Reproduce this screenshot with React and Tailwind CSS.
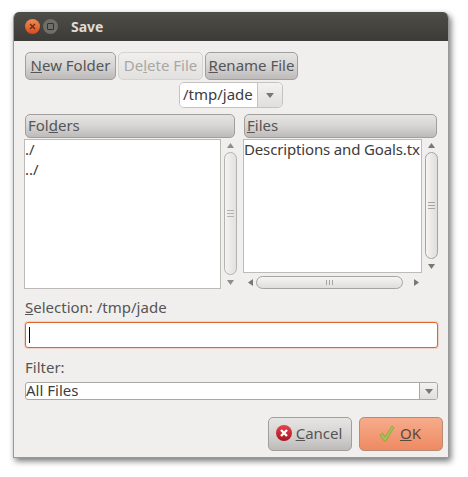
import React from 'react';

const buttonGrad = 'bg-gradient-to-b from-[#e6e5e3] via-[#d6d5d3] to-[#bcbbb9] border border-[#a09f9c] rounded-[5px]';

const ToolButton = ({ className, disabled, children }) => (
    <div
        className={`flex items-center justify-center h-[28px] pb-[2px] text-[15px] ${className} ${
            disabled
                ? 'border border-[#d4d3d0] rounded-[5px] bg-gradient-to-b from-[#f0efed] to-[#e2e1df] text-[#a8a7a4]'
                : `${buttonGrad} text-[#555]`
        }`}
    >
        {children}
    </div>
);

const Arrow = ({ dir }) => {
    const points = {
        up: '0,5 3.5,0 7,5',
        down: '0,0 7,0 3.5,5',
        left: '5,0 5,7 0,3.5',
        right: '0,0 0,7 5,3.5',
    };
    return (
        <svg width={dir === 'up' || dir === 'down' ? 7 : 5} height={dir === 'up' || dir === 'down' ? 5 : 7}>
            <polygon points={points[dir]} fill="#777" />
        </svg>
    );
};

const VScroll = ({ faded }) => (
    <div className={`flex flex-col items-center h-full w-[13px] ${faded ? 'opacity-80' : ''}`}>
        <div className="h-[13px] flex items-center"><Arrow dir="up" /></div>
        <div className="flex-1 w-[13px] rounded-[7px] border border-[#a5a4a1] bg-gradient-to-r from-[#f5f4f3] to-[#dfdedc] flex flex-col items-center justify-center gap-[2px]">
            <div className="w-[7px] h-px bg-[#a5a4a1]" />
            <div className="w-[7px] h-px bg-[#a5a4a1]" />
            <div className="w-[7px] h-px bg-[#a5a4a1]" />
        </div>
        <div className="h-[14px] flex items-center"><Arrow dir="down" /></div>
    </div>
);

const HScroll = () => (
    <div className="flex items-center h-[13px] mt-[3px] pl-[5px] w-[180px]">
        <div className="w-[5px] flex justify-center"><Arrow dir="left" /></div>
        <div className="ml-[3px] w-[147px] h-[13px] rounded-[7px] border border-[#a5a4a1] bg-gradient-to-b from-[#f5f4f3] to-[#dfdedc] flex items-center justify-center gap-[2px]">
            <div className="w-px h-[5px] bg-[#a5a4a1]" />
            <div className="w-px h-[5px] bg-[#a5a4a1]" />
            <div className="w-px h-[5px] bg-[#a5a4a1]" />
        </div>
        <div className="ml-[11px] w-[5px] flex justify-center"><Arrow dir="right" /></div>
    </div>
);

const ColumnHeader = ({ children }) => (
    <div className={`h-[24px] flex items-center pl-[2px] pb-[2px] text-[15px] text-[#555] ${buttonGrad}`}>{children}</div>
);

const ComboArrow = ({ className }) => (
    <div className={`flex items-center justify-center bg-gradient-to-b from-[#f3f2f1] to-[#e0dfdd] ${className}`}>
        <svg width="8" height="5"><polygon points="0,0 8,0 4,5" fill="#777" /></svg>
    </div>
);

export default function App() {
    return (
        <div className="w-[468px] h-[477px] bg-white pt-[12px] pl-[13px] font-['Noto_Sans','Open_Sans',sans-serif]">
            <div className="w-[436px] h-[446px] flex flex-col rounded-t-[6px] overflow-hidden bg-[#f0efed] shadow-[2px_3px_6px_rgba(0,0,0,0.55)] border-x border-b border-[#9a9995]">
                {/* title bar */}
                <div className="h-[29px] shrink-0 flex items-center bg-gradient-to-b from-[#4f4d48] to-[#3c3b37] pl-[11px]">
                    <div className="w-[15px] h-[15px] rounded-full bg-gradient-to-b from-[#f28b4e] to-[#d9481a] flex items-center justify-center">
                        <svg width="7" height="7" viewBox="0 0 7 7">
                            <path d="M1 1L6 6M6 1L1 6" stroke="#5a2a12" strokeWidth="1.1" />
                        </svg>
                    </div>
                    <div className="ml-[3px] w-[15px] h-[15px] rounded-full bg-[#6f6e69] flex items-center justify-center">
                        <div className="w-[7px] h-[7px] border border-[#33322f] rounded-[1px]" />
                    </div>
                    <div className="ml-[13px] text-[14px] font-bold text-[#dfdbd2]">Save</div>
                </div>

                <div className="flex-1 flex flex-col pl-[11px] pr-[5px]">
                    {/* toolbar */}
                    <div className="flex gap-[2px] mt-[11px]">
                        <ToolButton className="w-[91px]"><span><u>N</u>ew Folder</span></ToolButton>
                        <ToolButton className="w-[85px]" disabled><span>De<u>l</u>ete File</span></ToolButton>
                        <ToolButton className="w-[93px]"><span><u>R</u>ename File</span></ToolButton>
                    </div>

                    {/* directory combo */}
                    <div className="mt-[2px] ml-[154px] w-[104px] h-[26px] flex rounded-[5px] border border-[#c4c3c0] overflow-hidden">
                        <div className="w-[78px] bg-white border-r border-[#c4c3c0] pl-[3px] text-[15px] leading-[22px] text-[#3c3c3c]">/tmp/jade</div>
                        <ComboArrow className="flex-1" />
                    </div>

                    {/* lists */}
                    <div className="flex mt-[6px]">
                        <div className="w-[210px]">
                            <ColumnHeader><span>Fol<u>d</u>ers</span></ColumnHeader>
                        </div>
                        <div className="w-[193px] ml-[9px]">
                            <ColumnHeader><span><u>F</u>iles</span></ColumnHeader>
                        </div>
                    </div>

                    <div className="flex h-[150px] mt-px">
                        <div className="flex w-[215px] -ml-px">
                            <div className="w-[197px] bg-white border border-[#bcbbb7] text-[15px] leading-[20px] text-[#3c3c3c]">
                                <div className="-mt-px">./</div>
                                <div>../</div>
                            </div>
                            <div className="ml-[3px]"><VScroll faded /></div>
                        </div>
                        <div className="flex flex-col ml-[4px]">
                            <div className="flex h-[134px]">
                                <div className="w-[179px] bg-white border border-[#bcbbb7] text-[15px] leading-[20px] text-[#3c3c3c] overflow-hidden whitespace-nowrap">
                                    <div className="-mt-px tracking-[-0.15px]">Descriptions and Goals.tx</div>
                                </div>
                                <div className="ml-[3px]"><VScroll /></div>
                            </div>
                            <HScroll />
                        </div>
                    </div>

                    {/* selection */}
                    <div className="mt-[8px] text-[15px] leading-[20px] text-[#555]"><u>S</u>election: /tmp/jade</div>
                    <div className="mt-[5px] w-[413px] h-[26px] bg-white border border-[#e0652f] shadow-[0_0_0_1px_rgba(224,101,47,0.2)] rounded-[3px] flex items-center pl-[3px]">
                        <div className="w-px h-[16px] bg-black" />
                    </div>

                    {/* filter */}
                    <div className="mt-[9px] text-[15px] leading-[20px] text-[#555]">Filter:</div>
                    <div className="mt-[5px] w-[413px] h-[18px] flex bg-white border border-[#a9a8a4] rounded-[3px]">
                        <div className="flex-1 border-r border-[#a9a8a4] text-[15px] leading-[15px] text-[#3c3c3c]">All Files</div>
                        <ComboArrow className="w-[17px] rounded-r-[3px]" />
                    </div>

                    {/* actions */}
                    <div className="flex justify-end gap-[7px] mt-[17px]">
                        <div className={`w-[84px] h-[34px] pb-[2px] pr-[2px] flex items-center justify-center gap-[4px] text-[15px] text-[#555] ${buttonGrad}`}>
                            <svg width="16" height="16" viewBox="0 0 16 16">
                                <defs>
                                    <linearGradient id="cancelFill" x1="0" y1="0" x2="0" y2="1">
                                        <stop offset="0" stopColor="#e8424c" />
                                        <stop offset="1" stopColor="#a5141f" />
                                    </linearGradient>
                                </defs>
                                <circle cx="8" cy="8" r="8" fill="url(#cancelFill)" />
                                <path d="M5 5L11 11M11 5L5 11" stroke="#fff" strokeWidth="2.4" />
                            </svg>
                            <span><u>C</u>ancel</span>
                        </div>
                        <div className="w-[84px] h-[34px] pb-[2px] pr-[2px] flex items-center justify-center gap-[5px] text-[15px] text-[#5a4a40] rounded-[5px] border border-[#b98b74] bg-gradient-to-b from-[#f6ab8b] to-[#ee8a62]">
                            <svg width="16" height="17" viewBox="0 0 16 17">
                                <path d="M1 10L3.5 8L6 12L13 1L15 2.5L7 16H5Z" fill="#a3c44e" stroke="#7f9a3a" strokeWidth="0.6" />
                            </svg>
                            <span><u>O</u>K</span>
                        </div>
                    </div>
                </div>
            </div>
        </div>
    );
}
